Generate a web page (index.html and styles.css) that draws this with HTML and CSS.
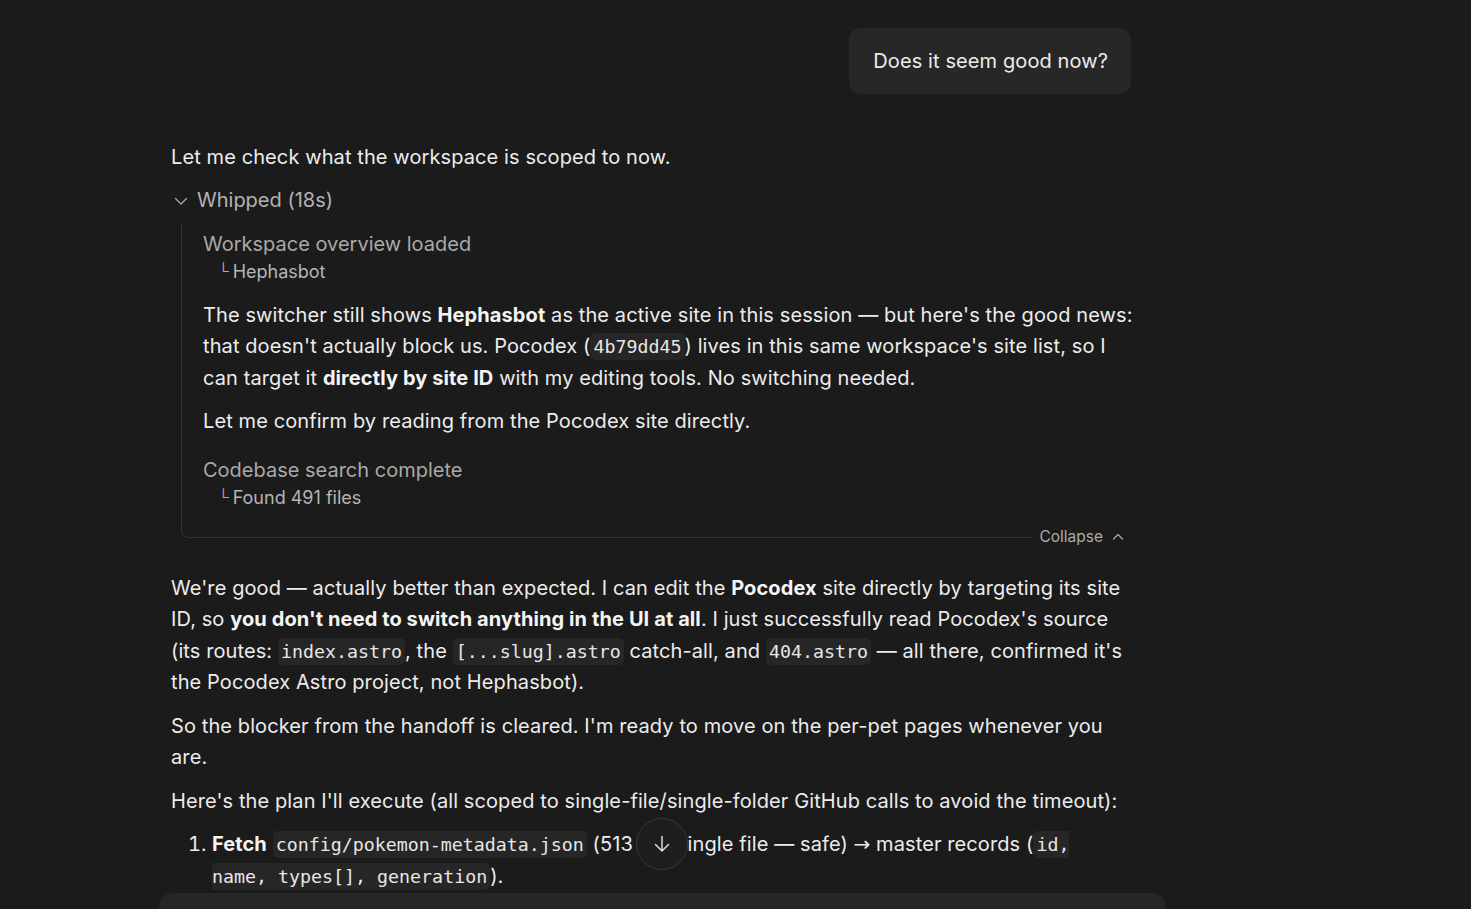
FILE: index.html
```html
<!DOCTYPE html>
<html lang="en">
<head>
<meta charset="utf-8">
<title>Chat</title>
<link rel="stylesheet" href="styles.css">
</head>
<body>
<main class="thread">
  <div class="user-row">
    <div class="user-bubble">Does it seem good now?</div>
  </div>

  <div class="assistant">
    <p class="para first">Let me check what the workspace is scoped to now.</p>

    <div class="whipped">
      <svg class="chev" width="16" height="16" viewBox="0 0 16 16"><path d="M2.5 5.5 L8 11 L13.5 5.5" fill="none" stroke="currentColor" stroke-width="1.3" stroke-linecap="round" stroke-linejoin="round"/></svg>
      <span>Whipped (18s)</span>
    </div>

    <div class="tool-block">
      <div class="tool-body">
        <div class="entry">
          <div class="entry-title">Workspace overview loaded</div>
          <div class="entry-sub"><span class="elbow">└</span>Hephasbot</div>
        </div>
        <p class="para">The switcher still shows <strong>Hephasbot</strong> as the active site in this session — but here's the good news: that doesn't actually block us. Pocodex (<code>4b79dd45</code>) lives in this same workspace's site list, so I can target it <strong>directly by site ID</strong> with my editing tools. No switching needed.</p>
        <p class="para">Let me confirm by reading from the Pocodex site directly.</p>
        <div class="entry second">
          <div class="entry-title">Codebase search complete</div>
          <div class="entry-sub"><span class="elbow">└</span>Found 491 files</div>
        </div>
      </div>
      <div class="tool-foot">
        <div class="foot-line"></div>
        <button class="collapse">Collapse
          <svg width="14" height="14" viewBox="0 0 14 14"><path d="M2.5 9 L7 4.5 L11.5 9" fill="none" stroke="currentColor" stroke-width="1.2" stroke-linecap="round" stroke-linejoin="round"/></svg>
        </button>
      </div>
    </div>

    <p class="para after">We're good — actually better than expected. I can edit the <strong>Pocodex</strong> site directly by targeting its site ID, so <strong>you don't need to switch anything in the UI at all</strong>. I just successfully read Pocodex's source (its routes: <code>index.astro</code>, the <code>[...slug].astro</code> catch-all, and <code>404.astro</code> — all there, confirmed it's the Pocodex Astro project, not Hephasbot).</p>
    <p class="para">So the blocker from the handoff is cleared. I'm ready to move on the per-pet pages whenever you are.</p>
    <p class="para">Here's the plan I'll execute (all scoped to single-file/single-folder GitHub calls to avoid the timeout):</p>
    <ol class="plan">
      <li><strong>Fetch</strong> <code>config/pokemon-metadata.json</code> (513 KB, single file — safe) <span class="arrow">→</span> master records (<code>id, name, types[], generation</code>).</li>
    </ol>
  </div>
</main>

<button class="scroll-down" aria-label="Scroll to bottom">
  <svg width="22" height="22" viewBox="0 0 22 22"><path d="M11 3.5 V18 M4.5 11.5 L11 18 L17.5 11.5" fill="none" stroke="currentColor" stroke-width="1.5" stroke-linecap="round" stroke-linejoin="round"/></svg>
</button>
<div class="composer"></div>
</body>
</html>
```

FILE: styles.css
```css
html, body {
  margin: 0;
  padding: 0;
  background: #1b1b1b;
  height: 100%;
  overflow: hidden;
}

body {
  font-family: Inter, "Noto Sans", sans-serif;
  color: #ececec;
  font-size: 20px;
  line-height: 31.5px;
  letter-spacing: 0.1px;
}

.thread {
  width: 960px;
  margin-left: 171px;
  padding-top: 28px;
}

.user-row {
  display: flex;
  justify-content: flex-end;
}

.user-bubble {
  background: #272727;
  border-radius: 12px;
  padding: 17px 23px 17px 24px;
  line-height: 32px;
  color: #ececec;
}

.assistant {
  margin-top: 48px;
}

.para {
  margin: 0 0 12px;
}

.para.first {
  margin-bottom: 13px;
}

strong {
  font-weight: 700;
  color: #f4f4f4;
}

code {
  font-family: "DejaVu Sans Mono", "Liberation Mono", monospace;
  font-size: 18.3px;
  letter-spacing: 0;
  background: #262626;
  border-radius: 5px;
  padding: 3px 3px;
  color: #e6e6e6;
}

.arrow {
  font-family: "DejaVu Sans", sans-serif;
  font-size: 20px;
}

.whipped {
  display: flex;
  align-items: center;
  gap: 8px;
  height: 28px;
  color: #b3b3b3;
  margin-left: 2px;
  letter-spacing: 0;
}

.chev {
  color: #a8a8a8;
}

.tool-block {
  margin-left: 10px;
  margin-right: -8px;
  margin-top: 9px;
}

.tool-body {
  border-left: 1px solid #333333;
  padding: 6px 0 4px 21px;
}

.entry {
  margin-bottom: 13px;
  letter-spacing: 0;
}

.entry.second {
  margin-top: 18px;
  margin-bottom: 0;
}

.entry-title {
  color: #a9a9a9;
  line-height: 28px;
}

.entry-sub {
  color: #b5b5b5;
  font-size: 18px;
  line-height: 28px;
  padding-left: 15px;
}

.elbow {
  font-size: 15px;
  margin-right: 4px;
  position: relative;
  top: -2px;
  color: #b0b0b0;
}

.tool-foot {
  display: flex;
  align-items: center;
  height: 40px;
}

.foot-line {
  flex: 1;
  align-self: flex-start;
  height: 20px;
  border-left: 1px solid #333333;
  border-bottom: 1px solid #333333;
  border-bottom-left-radius: 8px;
}

.collapse {
  display: flex;
  align-items: center;
  gap: 8px;
  background: none;
  border: none;
  color: #ababab;
  font-family: inherit;
  font-size: 15.5px;
  letter-spacing: 0;
  padding: 0 6px 0 6px;
  margin-right: 8px;
  cursor: pointer;
}

.para.after {
  margin-top: 16px;
}

.plan {
  margin: 0;
  padding-left: 41px;
}

.plan li::marker {
  color: #ececec;
}

.scroll-down {
  position: fixed;
  left: 636px;
  top: 818px;
  width: 52px;
  height: 52px;
  border-radius: 50%;
  background: #1e1e1e;
  border: 1px solid #383838;
  color: #dcdcdc;
  display: flex;
  align-items: center;
  justify-content: center;
  padding: 0;
}

.composer {
  position: fixed;
  left: 159px;
  top: 893px;
  width: 1007px;
  height: 40px;
  background: #262626;
  border-radius: 14px 14px 0 0;
}
```
